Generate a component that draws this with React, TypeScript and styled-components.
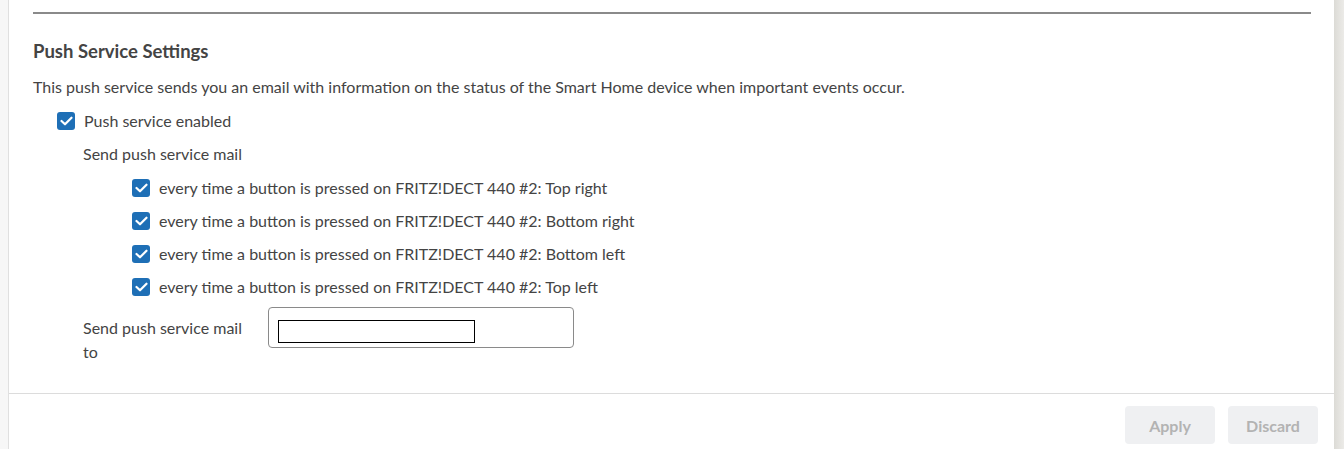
import styled, { createGlobalStyle } from "styled-components";

const Global = createGlobalStyle`
  html, body { margin: 0; padding: 0; background: #f7f7f7; }
  body { font-family: Lato, "Liberation Sans", sans-serif; color: #444; }
`;

const Page = styled.div`
  display: flex;
  height: 449px;
  overflow: hidden;
`;

const Gutter = styled.div`
  width: 8px;
  background: #f7f7f7;
  border-right: 1px solid #e0e0e0;
`;

const Panel = styled.div`
  flex: 1;
  display: flex;
  flex-direction: column;
  background: #fff;
`;

const Scrollbar = styled.div`
  width: 10px;
  background: linear-gradient(to right, #dcdbd6, #ecebe8);
`;

const Content = styled.div`
  padding: 12px 23px 0 24px;
  height: 393px;
  box-sizing: border-box;
`;

const Rule = styled.div`
  height: 2px;
  background: #8a8a8a;
`;

const Heading = styled.h2`
  margin: 26px 0 0;
  font-size: 18.5px;
  font-weight: 700;
  line-height: 22px;
  color: #444;
`;

const Text = styled.p`
  margin: 15px 0 0;
  font-size: 16px;
  line-height: 20px;
`;

const Row = styled.label<{ indent: number; top: number }>`
  display: flex;
  align-items: center;
  gap: 9px;
  margin: ${(p) => p.top}px 0 0 ${(p) => p.indent}px;
  font-size: 16px;
  line-height: 20px;
`;

const Box = styled.span`
  width: 18px;
  height: 18px;
  border-radius: 3px;
  background: #1e6fb6;
  display: flex;
  align-items: center;
  justify-content: center;
  flex-shrink: 0;
`;

const Sub = styled.div`
  margin: 13px 0 0 50px;
  font-size: 16px;
  line-height: 20px;
`;

const MailRow = styled.div`
  display: flex;
  align-items: flex-start;
  margin: 10px 0 0 50px;
`;

const MailLabel = styled.div`
  width: 185px;
  font-size: 16px;
  line-height: 24px;
  padding-top: 9px;
`;

const Field = styled.div`
  width: 306px;
  height: 41px;
  border: 1px solid #8a8a8a;
  border-radius: 4px;
  box-sizing: border-box;
  display: flex;
  align-items: flex-start;
  padding: 12px 0 0 9px;
`;

const Inner = styled.input`
  width: 197px;
  height: 23px;
  box-sizing: border-box;
  border: 1px solid #000;
  margin: 0;
  padding: 0 2px;
  outline: none;
`;

const Footer = styled.div`
  border-top: 1px solid #dcdcdc;
  display: flex;
  justify-content: flex-end;
  gap: 13px;
  padding: 12px 16px 0 0;
  flex: 1;
`;

const Button = styled.button`
  width: 90px;
  height: 38px;
  border: none;
  border-radius: 4px;
  background: #eff0f2;
  color: #b3b3b3;
  font-family: Lato, "Liberation Sans", sans-serif;
  font-weight: 700;
  font-size: 16px;
`;

const Check = () => (
  <Box>
    <svg width="13" height="10" viewBox="0 0 13 10">
      <path d="M1.5 5 L5 8.3 L11.5 1.7" fill="none" stroke="#fff" strokeWidth="2.2" strokeLinecap="round" strokeLinejoin="round" />
    </svg>
  </Box>
);

const buttons = ["Top right", "Bottom right", "Bottom left", "Top left"];

export default function App() {
  return (
    <>
      <Global />
      <Page>
        <Gutter />
        <Panel>
          <Content>
            <Rule />
            <Heading>Push Service Settings</Heading>
            <Text>
              This push service sends you an email with information on the status of the Smart Home device when important events occur.
            </Text>
            <Row indent={24} top={14}>
              <Check />
              Push service enabled
            </Row>
            <Sub>Send push service mail</Sub>
            {buttons.map((b, i) => (
              <Row key={b} indent={99} top={i === 0 ? 14 : 13}>
                <Check />
                every time a button is pressed on FRITZ!DECT 440 #2: {b}
              </Row>
            ))}
            <MailRow>
              <MailLabel>
                Send push service mail
                <br />
                to
              </MailLabel>
              <Field>
                <Inner />
              </Field>
            </MailRow>
          </Content>
          <Footer>
            <Button>Apply</Button>
            <Button>Discard</Button>
          </Footer>
        </Panel>
        <Scrollbar />
      </Page>
    </>
  );
}
